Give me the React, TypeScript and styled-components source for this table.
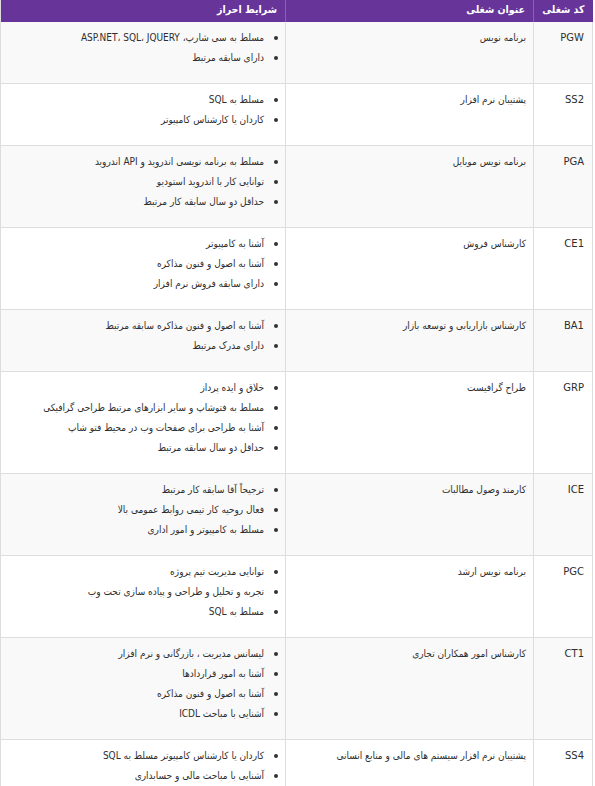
import styled, { createGlobalStyle } from "styled-components";

interface IJob {
  code: string;
  title: string;
  requirements: string[];
}

const jobs: IJob[] = [
  {
    code: "PGW",
    title: "برنامه نویس",
    requirements: ["مسلط به سی شارپ، ASP.NET، SQL، JQUERY", "دارای سابقه مرتبط"],
  },
  {
    code: "SS2",
    title: "پشتیبان نرم افزار",
    requirements: ["مسلط به SQL", "کاردان یا کارشناس کامپیوتر"],
  },
  {
    code: "PGA",
    title: "برنامه نویس موبایل",
    requirements: [
      "مسلط به برنامه نویسی اندروید و API اندروید",
      "توانایی کار با اندروید استودیو",
      "حداقل دو سال سابقه کار مرتبط",
    ],
  },
  {
    code: "CE1",
    title: "کارشناس فروش",
    requirements: ["آشنا به کامپیوتر", "آشنا به اصول و فنون مذاکره", "دارای سابقه فروش نرم افزار"],
  },
  {
    code: "BA1",
    title: "کارشناس بازاریابی و توسعه بازار",
    requirements: ["آشنا به اصول و فنون مذاکره سابقه مرتبط", "دارای مدرک مرتبط"],
  },
  {
    code: "GRP",
    title: "طراح گرافیست",
    requirements: [
      "خلاق و ایده پرداز",
      "مسلط به فتوشاپ و سایر ابزارهای مرتبط طراحی گرافیکی",
      "آشنا به طراحی برای صفحات وب در محیط فتو شاپ",
      "حداقل دو سال سابقه مرتبط",
    ],
  },
  {
    code: "ICE",
    title: "کارمند وصول مطالبات",
    requirements: [
      "ترجیحاً آقا سابقه کار مرتبط",
      "فعال روحیه کار تیمی روابط عمومی بالا",
      "مسلط به کامپیوتر و امور اداری",
    ],
  },
  {
    code: "PGC",
    title: "برنامه نویس ارشد",
    requirements: [
      "توانایی مدیریت تیم پروژه",
      "تجربه و تحلیل و طراحی و پیاده سازی تحت وب",
      "مسلط به SQL",
    ],
  },
  {
    code: "CT1",
    title: "کارشناس امور همکاران تجاری",
    requirements: [
      "لیسانس مدیریت ، بازرگانی و نرم افزار",
      "آشنا به امور قراردادها",
      "آشنا به اصول و فنون مذاکره",
      "آشنایی با مباحث ICDL",
    ],
  },
  {
    code: "SS4",
    title: "پشتیبان نرم افزار سیستم های مالی و منابع انسانی",
    requirements: [
      "کاردان یا کارشناس کامپیوتر مسلط به SQL",
      "آشنایی با مباحث مالی و حسابداری",
      "توانایی آموزش نرم افزار",
    ],
  },
];

const GlobalStyle = createGlobalStyle`
  body {
    margin: 0;
    background: #ffffff;
    font-family: "DejaVu Sans Condensed", "DejaVu Sans", sans-serif;
  }
`;

const Table = styled.table`
  direction: rtl;
  width: 592px;
  table-layout: fixed;
  border-collapse: collapse;
  font-size: 10px;
  color: #2e2e2e;
`;

const Col = styled.col<{ size: number }>`
  width: ${({ size }) => size}px;
`;

const HeadCell = styled.th`
  height: 22px;
  padding: 0 8px;
  background: #673499;
  color: #ffffff;
  font-weight: bold;
  font-size: 10.5px;
  text-align: right;
  line-height: 18px;
  vertical-align: top;
  border-left: 1px solid #8a64b4;
  &:last-child {
    border-left: 1px solid #dddddd;
  }
`;

const Row = styled.tr<{ striped: boolean }>`
  background: ${({ striped }) => (striped ? "#f9f9f9" : "#ffffff")};
`;

const Cell = styled.td`
  padding: 6px 7px;
  line-height: 20px;
  vertical-align: top;
  text-align: right;
  border: 1px solid #dddddd;
  border-top: none;
`;

const CodeCell = styled(Cell)`
  padding-right: 8px;
  font-family: "DejaVu Sans", sans-serif;
`;

const List = styled.ul`
  margin: 0 0 9px;
  padding: 0 8px 0 0;
  list-style: none;
`;

const Item = styled.li`
  position: relative;
  padding-right: 6px;
  &::before {
    content: "";
    position: absolute;
    right: -8px;
    top: 8px;
    width: 4px;
    height: 4px;
    border-radius: 50%;
    background: #333333;
  }
`;

export default function App() {
  return (
    <>
      <GlobalStyle />
      <Table>
        <colgroup>
          <Col size={59} />
          <Col size={248} />
          <Col size={285} />
        </colgroup>
        <thead>
          <tr>
            <HeadCell>کد شغلی</HeadCell>
            <HeadCell>عنوان شغلی</HeadCell>
            <HeadCell>شرایط احراز</HeadCell>
          </tr>
        </thead>
        <tbody>
          {jobs.map((job, i) => (
            <Row key={job.code} striped={i % 2 === 0}>
              <CodeCell>{job.code}</CodeCell>
              <Cell>{job.title}</Cell>
              <Cell>
                <List>
                  {job.requirements.map((r) => (
                    <Item key={r}>{r}</Item>
                  ))}
                </List>
              </Cell>
            </Row>
          ))}
        </tbody>
      </Table>
    </>
  );
}
